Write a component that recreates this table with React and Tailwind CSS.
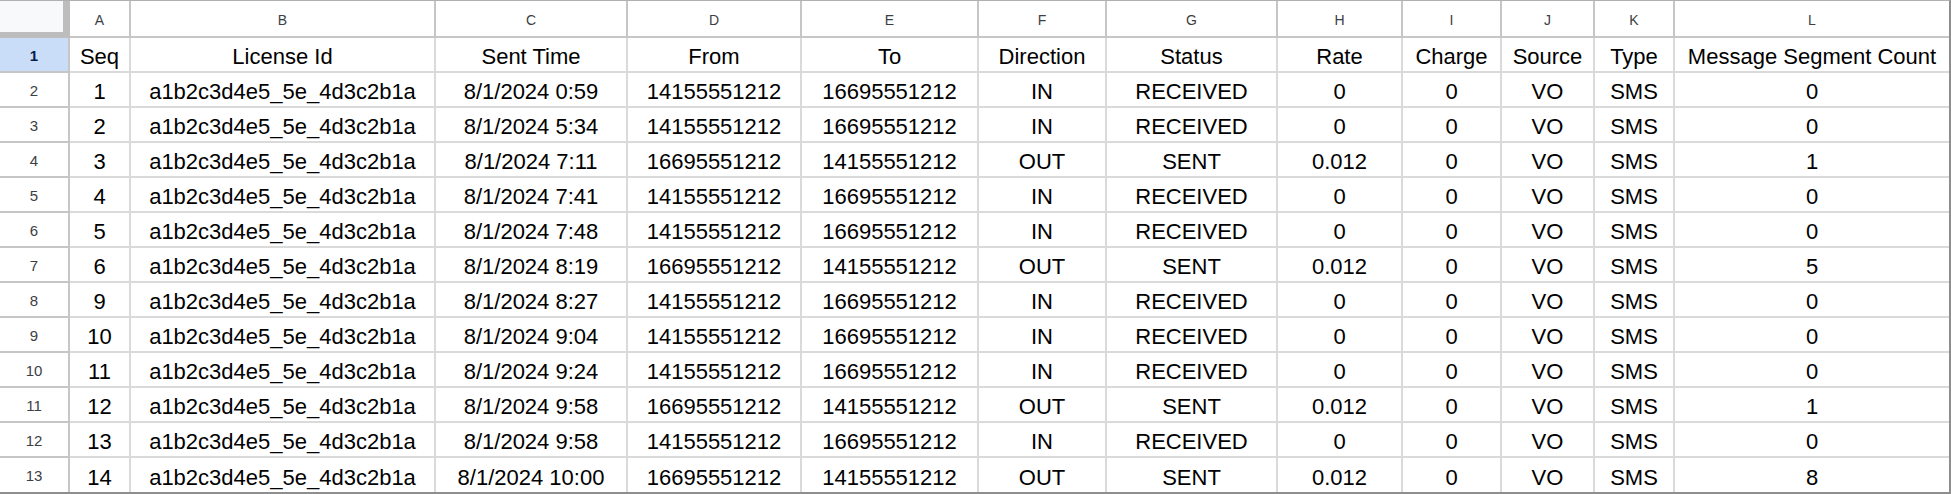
import React from 'react';

const letters = ['A', 'B', 'C', 'D', 'E', 'F', 'G', 'H', 'I', 'J', 'K', 'L'];

const head = ['Seq', 'License Id', 'Sent Time', 'From', 'To', 'Direction', 'Status', 'Rate', 'Charge', 'Source', 'Type', 'Message Segment Count'];

const IN = ['14155551212', '16695551212', 'IN', 'RECEIVED', '0'];
const OUT = ['16695551212', '14155551212', 'OUT', 'SENT', '0.012'];

const rows = [
  [1, '0:59', IN, 0],
  [2, '5:34', IN, 0],
  [3, '7:11', OUT, 1],
  [4, '7:41', IN, 0],
  [5, '7:48', IN, 0],
  [6, '8:19', OUT, 5],
  [9, '8:27', IN, 0],
  [10, '9:04', IN, 0],
  [11, '9:24', IN, 0],
  [12, '9:58', OUT, 1],
  [13, '9:58', IN, 0],
  [14, '10:00', OUT, 8],
].map(([seq, time, d, count]) => [
  String(seq), 'a1b2c3d4e5_5e_4d3c2b1a', '8/1/2024 ' + time, ...d, '0', 'VO', 'SMS', String(count),
]);

function ColHead({ children, last }) {
  return (
    <div className={`flex items-center justify-center pt-[3px] border-b-2 border-[#c4c7c5] bg-white text-[14px] text-[#3c4043] ${last ? '' : 'border-r-2'}`}>
      {children}
    </div>
  );
}

function RowHead({ n, selected, last }) {
  return (
    <div className={`flex items-center justify-center pt-[3px] border-r-2 border-[#c4c7c5] text-[15px] ${last ? '' : 'border-b-2'} ${selected ? 'bg-[#c9ddf9] font-bold text-[#041e49]' : 'bg-white text-[#3c4043]'}`}>
      {n}
    </div>
  );
}

function Cell({ children, lastCol, lastRow }) {
  return (
    <div className={`flex items-end justify-center pb-[2px] border-[#dadada] text-[22px] leading-[25px] text-black whitespace-nowrap overflow-hidden ${lastCol ? '' : 'border-r-2'} ${lastRow ? '' : 'border-b-2'}`}>
      {children}
    </div>
  );
}

export default function App() {
  const all = [head, ...rows];
  return (
    <div className="w-[1951px] h-[494px] bg-white font-['Liberation_Sans',Arial,sans-serif]">
      <div className="grid grid-cols-[70px_61px_305px_192px_174px_177px_128px_171px_125px_99px_93px_80px_274px] grid-rows-[37px_repeat(12,35px)_34px] border-t border-[#b0b0b0] border-r-2 border-b-2 border-r-[#8e8e8e] border-b-[#8e8e8e]">
        <div className="bg-[#f8f9fa] border-r-[7px] border-b-[6px] border-[#bdbdbd]" />
        {letters.map((l, i) => (
          <ColHead key={l} last={i === letters.length - 1}>{l}</ColHead>
        ))}
        {all.map((r, ri) => (
          <React.Fragment key={ri}>
            <RowHead n={ri + 1} selected={ri === 0} last={ri === all.length - 1} />
            {r.map((v, ci) => (
              <Cell key={ci} lastCol={ci === r.length - 1} lastRow={ri === all.length - 1}>{v}</Cell>
            ))}
          </React.Fragment>
        ))}
      </div>
    </div>
  );
}
